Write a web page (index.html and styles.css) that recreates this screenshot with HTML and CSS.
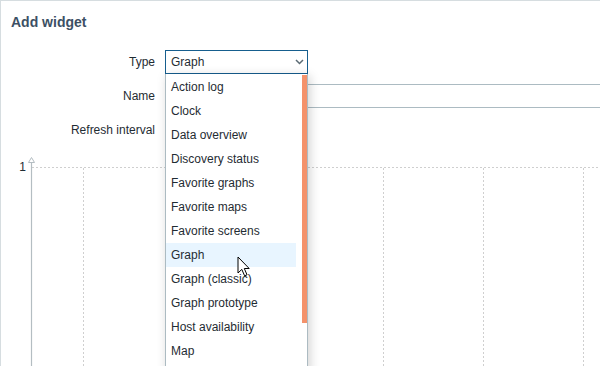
FILE: index.html
```html
<!DOCTYPE html>
<html lang="en">
<head>
    <meta charset="UTF-8">
    <meta name="viewport" content="width=device-width, initial-scale=1.0">
    <title>Add widget</title>
    <link rel="stylesheet" href="styles.css">
</head>
<body>
    <div class="dialog">
        <h4 class="dialog-title">Add widget</h4>
        <form class="widget-form">
            <div class="form-row">
                <label>Type</label>
                <div class="field">
                    <div class="select">
                        <span>Graph</span>
                        <svg class="chevron" width="9" height="6" viewBox="0 0 9 6">
                            <path d="M1 1 L4.5 4.5 L8 1" fill="none" stroke="#5b6b74" stroke-width="1.5"/>
                        </svg>
                    </div>
                    <div class="dropdown">
                        <ul class="options">
                            <li>Action log</li>
                            <li>Clock</li>
                            <li>Data overview</li>
                            <li>Discovery status</li>
                            <li>Favorite graphs</li>
                            <li>Favorite maps</li>
                            <li>Favorite screens</li>
                            <li class="hover">Graph</li>
                            <li>Graph (classic)</li>
                            <li>Graph prototype</li>
                            <li>Host availability</li>
                            <li>Map</li>
                        </ul>
                        <div class="scroll-track">
                            <div class="scroll-thumb"></div>
                        </div>
                    </div>
                </div>
            </div>
            <div class="form-row">
                <label>Name</label>
                <div class="field">
                    <input type="text" class="text-input">
                </div>
            </div>
            <div class="form-row">
                <label>Refresh interval</label>
                <div class="field"></div>
            </div>
        </form>
        <div class="preview">
            <svg width="600" height="216" viewBox="0 0 600 216">
                <g stroke="#cfcfcf" stroke-width="1" stroke-dasharray="2,2" fill="none">
                    <line x1="31" y1="17.5" x2="600" y2="17.5"/>
                    <line x1="82.5" y1="18" x2="82.5" y2="216"/>
                    <line x1="182.5" y1="18" x2="182.5" y2="216"/>
                    <line x1="282.5" y1="18" x2="282.5" y2="216"/>
                    <line x1="382.5" y1="18" x2="382.5" y2="216"/>
                    <line x1="482.5" y1="18" x2="482.5" y2="216"/>
                    <line x1="582.5" y1="18" x2="582.5" y2="216"/>
                </g>
                <line x1="30.5" y1="12" x2="30.5" y2="216" stroke="#b4bdc2" stroke-width="1.2"/>
                <path d="M30.5 7.5 L27.5 12.5 L33.5 12.5 Z" fill="#fff" stroke="#b4bdc2" stroke-width="1"/>
                <text x="25" y="21" text-anchor="end" class="axis-label">1</text>
            </svg>
        </div>
    </div>
    <svg class="cursor" width="14" height="22" viewBox="0 0 14 22">
        <path d="M1 1 L1 17 L4.8 13.4 L7.6 19.8 L10 18.8 L7.3 12.5 L12.2 12.5 Z" fill="#fff" stroke="#000" stroke-width="1" stroke-linejoin="round"/>
    </svg>
</body>
</html>
```

FILE: styles.css
```css
html, body {
    margin: 0;
    padding: 0;
    overflow: hidden;
    background-color: #fff;
}
body {
    font-family: Arial, "Liberation Sans", sans-serif;
    font-size: 12px;
    color: #1f2c33;
    width: 600px;
    height: 366px;
    position: relative;
}
.dialog {
    border-top: 1px solid #d6dde0;
    border-left: 1px solid #d6dde0;
    height: 366px;
    box-sizing: border-box;
}
.dialog-title {
    margin: 0;
    padding: 13px 10px 0;
    font-size: 14px;
    line-height: 16px;
    font-weight: bold;
    color: #3c5064;
}
.widget-form {
    padding-top: 20px;
    display: flex;
    flex-direction: column;
    gap: 10px;
}
.form-row {
    display: grid;
    grid-template-columns: 154px 460px;
    column-gap: 10px;
    height: 24px;
}
.form-row label {
    text-align: right;
    line-height: 22px;
    padding-top: 1px;
}
.field {
    position: relative;
}
.select {
    height: 24px;
    box-sizing: border-box;
    width: 143px;
    border: 1px solid #165e8e;
    padding: 0 3px 0 5px;
    display: flex;
    align-items: center;
    justify-content: space-between;
    line-height: 22px;
    background-color: #fff;
}
.chevron {
    display: block;
}
.dropdown {
    position: absolute;
    top: 24px;
    left: 0;
    width: 143px;
    height: 300px;
    box-sizing: border-box;
    border-left: 1px solid #acbbc2;
    border-right: 1px solid #acbbc2;
    background-color: #fff;
    box-shadow: 2px 2px 10px rgba(0, 0, 0, 0.18);
    display: flex;
    z-index: 5;
}
.options {
    list-style: none;
    margin: 0;
    padding: 1px 0 0;
    width: 130px;
}
.options li {
    height: 24px;
    line-height: 24px;
    padding-left: 5px;
    white-space: nowrap;
}
.options li.hover {
    background-color: #e8f5ff;
}
.scroll-track {
    width: 11px;
    padding: 1px 0 0 6px;
    box-sizing: border-box;
}
.scroll-thumb {
    width: 5px;
    height: 248px;
    background-color: #f4926b;
}
.text-input {
    display: block;
    width: 460px;
    height: 24px;
    box-sizing: border-box;
    border: 1px solid #acbbc2;
    margin: 0;
    padding: 0 5px;
    font: inherit;
}
.preview {
    margin-top: 8px;
}
.preview svg {
    display: block;
}
.axis-label {
    font-family: Arial, "Liberation Sans", sans-serif;
    font-size: 12px;
    fill: #1f2c33;
}
.cursor {
    position: absolute;
    left: 237px;
    top: 256px;
    z-index: 10;
}
```
